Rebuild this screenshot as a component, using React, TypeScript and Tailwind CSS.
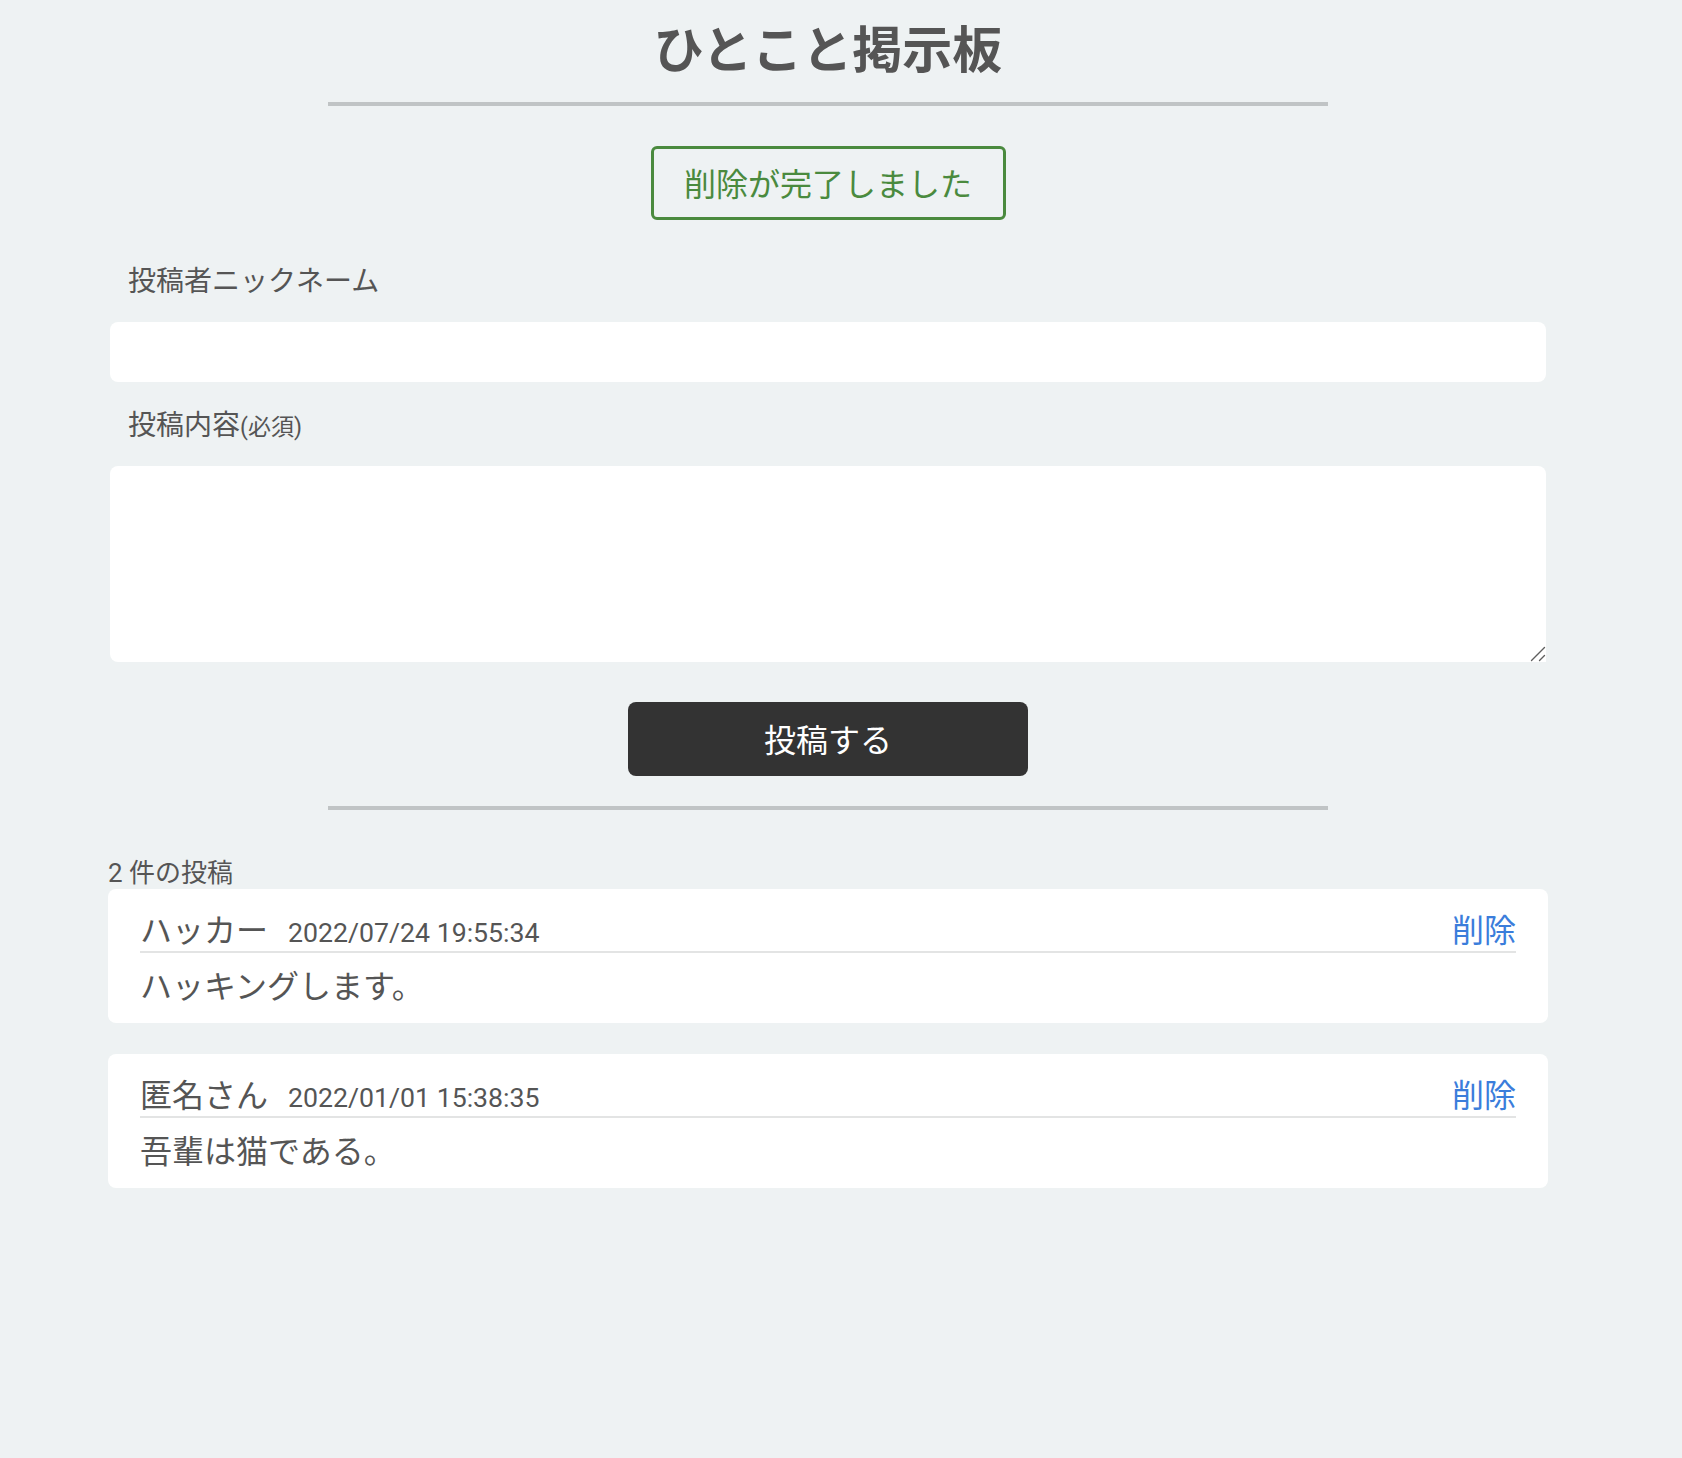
import { useState } from "react";

type Post = { id: number; name: string; date: string; body: string };

const posts: Post[] = [
  { id: 2, name: "ハッカー", date: "2022/07/24 19:55:34", body: "ハッキングします。" },
  { id: 1, name: "匿名さん", date: "2022/01/01 15:38:35", body: "吾輩は猫である。" },
];

const PostCard = ({ post }: { post: Post }) => (
  <div className="rounded-[8px] bg-white px-8 pt-[22px] pb-[14px]">
    <div className="flex h-[42px] items-baseline border-b-2 border-[#e3e4e4] leading-[40px]">
      <span className="text-[32px]">{post.name}</span>
      <span className="ml-[20px] text-[26.7px]">{post.date}</span>
      <button className="ml-auto cursor-pointer text-[32px] text-[#3b7ddb]">削除</button>
    </div>
    <p className="mt-[12px] text-[32px] leading-[44px]">{post.body}</p>
  </div>
);

export default function App() {
  const [name, setName] = useState("");
  const [body, setBody] = useState("");

  return (
    <div className="min-h-screen bg-[#eef2f3] font-['Roboto','Noto_Sans_CJK_JP',sans-serif] text-[#555]">
      <div className="w-[1656px] pb-[60px]">
        <h1 className="pt-[14px] text-center text-[50px] font-bold leading-[75px]">ひとこと掲示板</h1>
        <hr className="mx-auto mt-[13px] h-[4px] w-[1000px] border-0 bg-[#c0c4c5]" />

        <div className="mt-[40px] flex justify-center">
          <div className="flex h-[74px] w-[355px] items-center justify-center rounded-[6px] border-[3px] border-[#4a8a3e] pt-[4px] text-[32px] text-[#4a8a3e]">
            削除が完了しました
          </div>
        </div>

        <form className="mx-auto w-[1440px]" onSubmit={(e) => e.preventDefault()}>
          <label className="mt-[41px] block pl-[20px] text-[28px] leading-[42px]">投稿者ニックネーム</label>
          <input
            value={name}
            onChange={(e) => setName(e.target.value)}
            className="mx-[2px] mt-[19px] block h-[60px] w-[1436px] rounded-[8px] border-0 bg-white px-4 text-[28px] outline-none"
          />
          <label className="mt-[23px] block pl-[20px] text-[28px] leading-[42px]">
            投稿内容<span className="text-[23px]">(必須)</span>
          </label>
          <div className="relative mx-[2px] mt-[17px] w-[1436px]">
            <textarea
              value={body}
              onChange={(e) => setBody(e.target.value)}
              className="block h-[196px] w-full resize-y rounded-[8px] border-0 bg-white p-4 text-[28px] outline-none"
            />
            <svg
              className="pointer-events-none absolute right-0 bottom-0 bg-white"
              width="16"
              height="16"
              viewBox="0 0 16 16"
            >
              <path d="M1.5 14.5 L14.5 1.5 M9.5 14.5 L14.5 9.5" stroke="#5f5f5f" strokeWidth="1.4" strokeLinecap="round" />
            </svg>
          </div>
          <div className="mt-[40px] flex justify-center">
            <button
              type="submit"
              className="h-[74px] w-[400px] cursor-pointer rounded-[8px] bg-[#333333] pt-[4px] text-[32px] text-white"
            >
              投稿する
            </button>
          </div>
        </form>

        <hr className="mx-auto mt-[30px] h-[4px] w-[1000px] border-0 bg-[#c0c4c5]" />

        <div className="mx-auto w-[1440px]">
          <p className="mt-[47px] text-[26px] leading-[32px]">2 件の投稿</p>
          <div className="flex flex-col gap-[31px]">
            {posts.map((p) => (
              <PostCard key={p.id} post={p} />
            ))}
          </div>
        </div>
      </div>
    </div>
  );
}
